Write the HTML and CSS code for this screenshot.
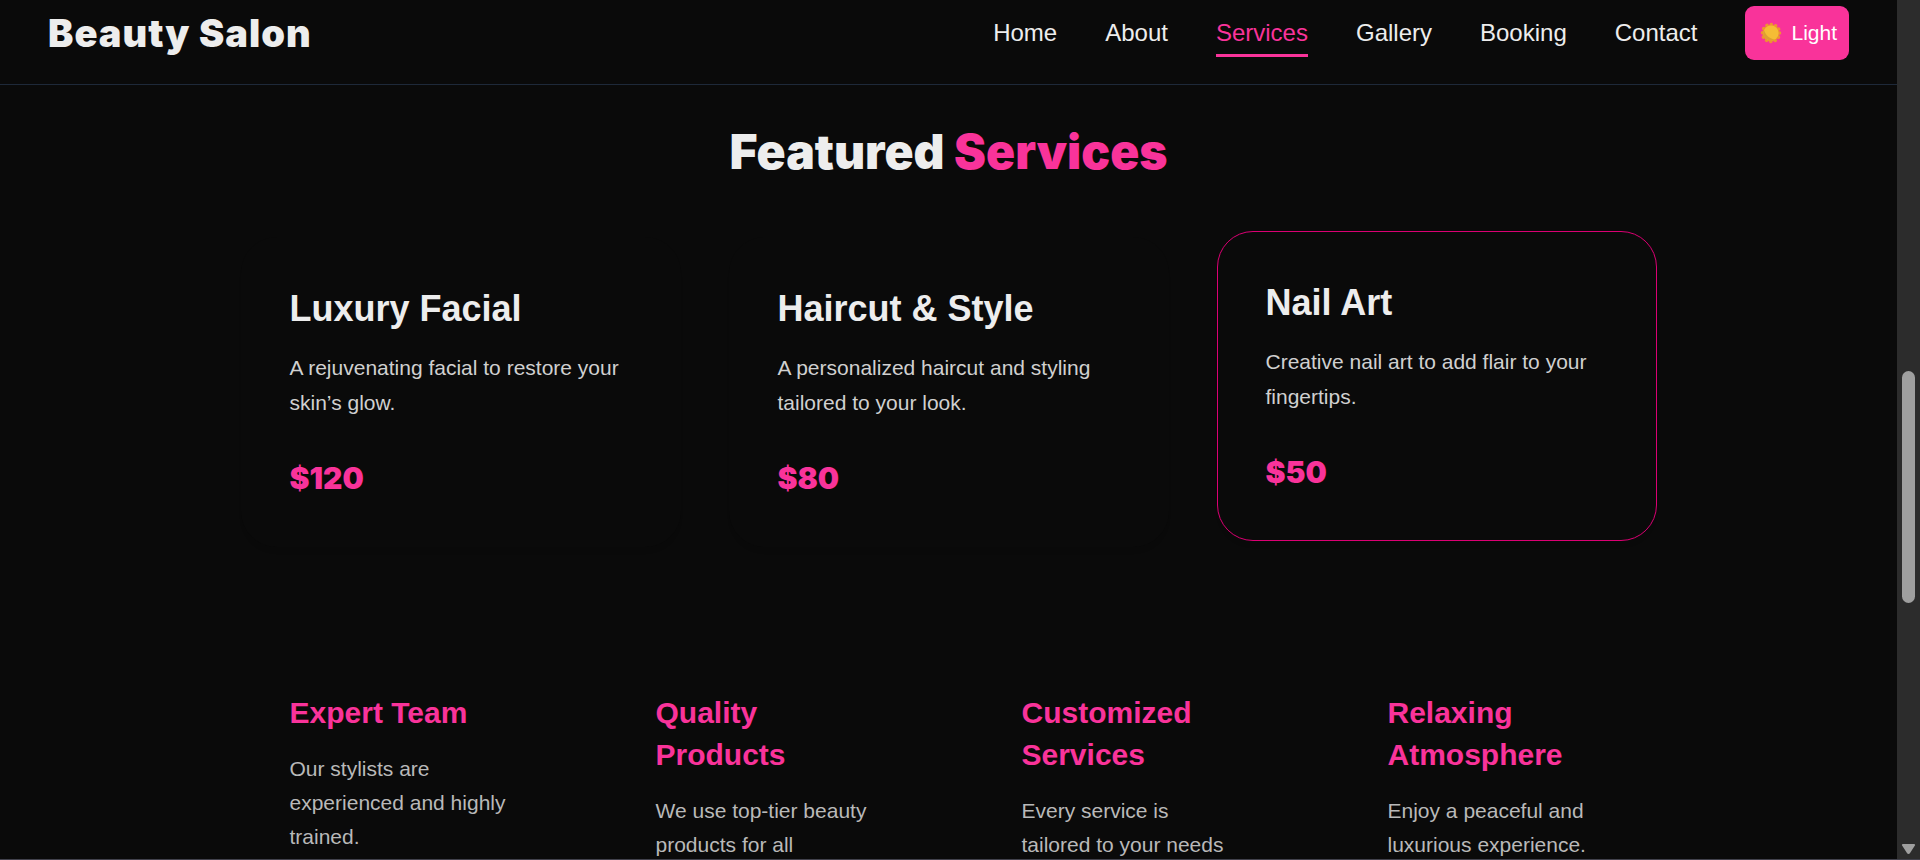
FILE: index.html
```html
<!DOCTYPE html>
<html lang="en" data-theme="dark">
<head>
    <meta charset="UTF-8">
    <meta name="viewport" content="width=device-width, initial-scale=1.0">
    <title>Beauty Salon</title>
    <link rel="stylesheet" href="styles.css">
</head>
<body>
    <div class="page">
        <header class="header">
            <div class="logo">Beauty Salon</div>
            <nav class="nav">
                <a href="#home">Home</a>
                <a href="#about">About</a>
                <a href="#services" class="active">Services</a>
                <a href="#gallery">Gallery</a>
                <a href="#booking">Booking</a>
                <a href="#contact">Contact</a>
                <button type="button" class="theme-toggle">
                    <svg class="sun" viewBox="0 0 28 28" aria-hidden="true">
                        <circle cx="14" cy="14" r="8.6" fill="#ee9233" />
                        <circle cx="14" cy="14" r="8.6" fill="none" stroke="#ee9233" stroke-width="3.4" stroke-linecap="round" stroke-dasharray="0.1 4.403" />
                        <circle cx="14" cy="14" r="7.6" fill="#f5bd35" />
                        <path d="M7 11a7.6 7.6 0 0 0 11 9.4C13 20 9 17 7 11z" fill="#dda032" />
                    </svg>
                    Light
                </button>
            </nav>
        </header>

        <main class="content">
            <section class="services" id="services">
                <h2 class="section-title">Featured <span>Services</span></h2>
                <div class="service-grid">
                    <article class="card">
                        <h3>Luxury Facial</h3>
                        <p>A rejuvenating facial to restore your skin’s glow.</p>
                        <div class="price">$120</div>
                    </article>
                    <article class="card">
                        <h3>Haircut &amp; Style</h3>
                        <p>A personalized haircut and styling tailored to your look.</p>
                        <div class="price">$80</div>
                    </article>
                    <article class="card highlighted">
                        <h3>Nail Art</h3>
                        <p>Creative nail art to add flair to your fingertips.</p>
                        <div class="price">$50</div>
                    </article>
                </div>
            </section>

            <section class="features">
                <article class="feature">
                    <h3>Expert Team</h3>
                    <p>Our stylists are experienced and highly trained.</p>
                </article>
                <article class="feature">
                    <h3>Quality Products</h3>
                    <p>We use top-tier beauty products for all</p>
                </article>
                <article class="feature">
                    <h3>Customized Services</h3>
                    <p>Every service is tailored to your needs</p>
                </article>
                <article class="feature">
                    <h3>Relaxing Atmosphere</h3>
                    <p>Enjoy a peaceful and luxurious experience.</p>
                </article>
            </section>
        </main>
    </div>

    <div class="scrollbar" aria-hidden="true">
        <div class="thumb"></div>
        <svg class="arrow" viewBox="0 0 15 12">
            <path d="M2 1h11a1 1 0 0 1 .9 1.6l-5 7.6a1.7 1.7 0 0 1-2.8 0l-5-7.6A1 1 0 0 1 2 1z" />
        </svg>
    </div>
</body>
</html>
```
FILE: styles.css
```css
:root {
    --primary: #f9339a;
    --highlight: #db0073;
    --background: #0a0a0a;
    --text: #ededed;
    --border: #1e2939;
    --font: "Liberation Sans", Arial, sans-serif;
    --font-black: "Arial Black", Inter, sans-serif;
}

* {
    box-sizing: border-box;
    margin: 0;
    padding: 0;
}

body {
    display: grid;
    grid-template-columns: 1fr 23px;
    grid-template-rows: minmax(0, 1fr);
    height: 100vh;
    overflow: hidden;
    border-bottom: 1px solid #42424d;
    font-family: var(--font);
    background: var(--background);
    color: var(--text);
}

.page {
    min-width: 0;
    overflow: hidden;
}

/* Header */
.header {
    display: flex;
    justify-content: space-between;
    align-items: center;
    padding: 6px 48px 24px;
    border-bottom: 1px solid var(--border);
}

.logo {
    font-family: var(--font-black);
    font-size: 38px;
    font-weight: 900;
    line-height: 54px;
    letter-spacing: 1px;
}

.nav {
    display: flex;
    align-items: center;
    gap: 48px;
}

.nav a {
    padding: 9px 0 6px;
    border-bottom: 3px solid transparent;
    color: var(--text);
    font-size: 24px;
    line-height: 30px;
    text-decoration: none;
}

.nav a.active {
    color: var(--primary);
    border-color: var(--primary);
}

.theme-toggle {
    display: flex;
    align-items: center;
    gap: 6px;
    padding: 12px;
    border: none;
    border-radius: 9px;
    background: var(--primary);
    color: white;
    font-family: var(--font);
    font-size: 21px;
    line-height: 30px;
    cursor: pointer;
}

.sun {
    width: 28px;
    height: 28px;
}

/* Services */
.content {
    max-width: 1416px;
    margin: 0 auto;
}

.services {
    padding: 38px 0 96px;
}

.section-title {
    margin-bottom: 56px;
    font-family: var(--font-black);
    font-size: 48px;
    font-weight: 900;
    line-height: 58px;
    text-align: center;
}

.section-title span {
    color: var(--primary);
}

.service-grid {
    display: grid;
    grid-template-columns: repeat(3, 1fr);
    gap: 48px;
}

.card {
    padding: 48px;
    border: 1px solid transparent;
    border-radius: 36px;
    background: var(--background);
    box-shadow: 0 6px 6px -4px rgba(0, 0, 0, 0.1);
}

.card.highlighted {
    border-color: var(--highlight);
    transform: translateY(-6px);
}

.card h3 {
    margin-bottom: 18px;
    font-size: 36px;
    line-height: 46px;
}

.card p {
    margin-bottom: 38px;
    color: #d0d0d0;
    font-size: 21px;
    line-height: 35px;
}

.price {
    color: var(--primary);
    font-family: var(--font-black);
    font-size: 30px;
    font-weight: 900;
    line-height: 40px;
}

/* Features */
.features {
    display: grid;
    grid-template-columns: repeat(4, 1fr);
    gap: 48px;
}

.feature {
    padding: 48px;
    border: 1px solid transparent;
}

.feature h3 {
    margin-bottom: 18px;
    color: var(--primary);
    font-size: 30px;
    line-height: 42px;
}

.feature p {
    color: #b9b9b9;
    font-size: 21px;
    line-height: 34px;
}

/* Scrollbar */
.scrollbar {
    display: grid;
    grid-template-rows: 371fr 232fr 240fr 12px 4px;
    justify-items: center;
    background: #2c2c2c;
}

.thumb {
    grid-row: 2;
    width: 13px;
    border-radius: 7px;
    background: #9f9f9f;
}

.arrow {
    grid-row: 4;
    width: 15px;
    height: 12px;
    fill: #9f9f9f;
}
```
